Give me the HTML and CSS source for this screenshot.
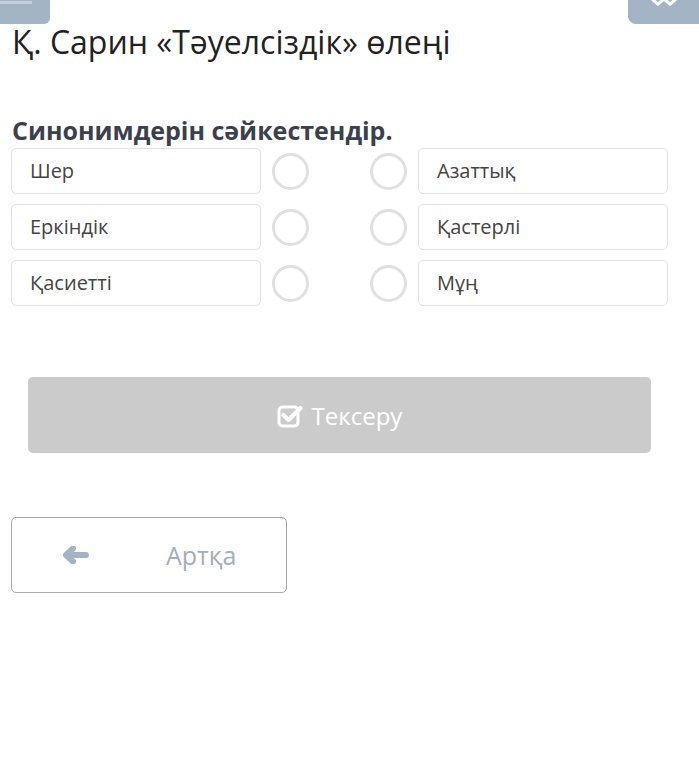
FILE: index.html
```html
<!DOCTYPE html>
<html lang="kk">
<head>
    <meta charset="UTF-8">
    <meta name="viewport" content="width=device-width, initial-scale=1.0">
    <title>Қ. Сарин «Тәуелсіздік» өлеңі</title>
    <link rel="stylesheet" href="styles.css">
</head>
<body>
    <div class="topbar">
        <button class="corner corner-left" aria-label="Мәзір">
            <span class="bar"></span>
        </button>
        <button class="corner corner-right" aria-label="Жабу">
            <svg width="30" height="8" viewBox="0 0 30 8">
                <path d="M4 0 L9 4 L14 0 M16 0 L21 4 L26 0" stroke="#fff" stroke-width="3" fill="none" stroke-linecap="round"/>
            </svg>
        </button>
    </div>

    <div class="page">
        <h1 class="title">Қ. Сарин «Тәуелсіздік» өлеңі</h1>
        <h2 class="task">Синонимдерін сәйкестендір.</h2>

        <div class="match">
            <div class="item">Шер</div>
            <span class="dot"></span>
            <span></span>
            <span class="dot"></span>
            <div class="item">Азаттық</div>

            <div class="item">Еркіндік</div>
            <span class="dot"></span>
            <span></span>
            <span class="dot"></span>
            <div class="item">Қастерлі</div>

            <div class="item">Қасиетті</div>
            <span class="dot"></span>
            <span></span>
            <span class="dot"></span>
            <div class="item">Мұң</div>
        </div>

        <button class="check" disabled>
            <svg width="27" height="25" viewBox="0 0 27 25">
                <rect x="2" y="4" width="19" height="19" rx="3.5" fill="none" stroke="#fff" stroke-width="3"/>
                <path d="M6.5 12 L11.5 17 L23.5 5" fill="none" stroke="#fff" stroke-width="4.2" stroke-linecap="round" stroke-linejoin="round"/>
            </svg>
            Тексеру
        </button>

        <button class="back">
            <svg width="26" height="18" viewBox="0 0 26 18">
                <path d="M10 2.5 L3 9 L10 15.5 M4 9 L23 9" fill="none" stroke="#a3b5c4" stroke-width="6" stroke-linecap="round" stroke-linejoin="round"/>
            </svg>
            <span>Артқа</span>
        </button>
    </div>
</body>
</html>
```

FILE: styles.css
```css
body {
    margin: 0;
    background: #fff;
    font-family: "Open Sans", "Noto Sans", sans-serif;
    color: #333;
}
.topbar {
    display: flex;
    justify-content: space-between;
    height: 24px;
}
.corner {
    height: 24px;
    border: none;
    padding: 0;
    background: #a3b5c4;
}
.corner-left {
    width: 50px;
    border-bottom-right-radius: 6px;
    position: relative;
}
.corner-left .bar {
    position: absolute;
    left: 0;
    top: 1px;
    width: 32px;
    height: 3px;
    background: #c3d0da;
}
.corner-right {
    width: 71px;
    border-bottom-left-radius: 8px;
    display: flex;
    justify-content: center;
    align-items: flex-start;
}
.page {
    padding: 0 31px 0 11px;
}
.title {
    margin: 0;
    padding-left: 1px;
    font-size: 32px;
    line-height: 36px;
    font-weight: 400;
    color: #222;
}
.task {
    margin: 55px 0 3px;
    padding-left: 1px;
    font-size: 25px;
    line-height: 30px;
    font-weight: 700;
    color: #3b404b;
}
.match {
    display: grid;
    grid-template-columns: 250px 37px 1fr 37px 250px;
    column-gap: 11px;
    row-gap: 10px;
    align-items: center;
}
.item {
    height: 44px;
    line-height: 44px;
    border: 1px solid #e2e2e2;
    border-radius: 5px;
    padding-left: 18px;
    font-size: 20px;
    color: #444;
}
.dot {
    width: 31px;
    height: 31px;
    border: 3px solid #e0e0e0;
    border-radius: 50%;
}
.check {
    display: flex;
    justify-content: center;
    align-items: center;
    gap: 8px;
    width: calc(100% - 34px);
    height: 76px;
    margin: 71px 17px 0;
    border: none;
    border-radius: 5px;
    background: #cbcbcb;
    color: #fff;
    font-family: inherit;
    font-size: 24px;
}
.back {
    display: flex;
    align-items: center;
    width: 276px;
    height: 76px;
    margin-top: 64px;
    padding: 0 0 0 51px;
    border: 1px solid #a9a9a9;
    border-radius: 5px;
    background: #fff;
    font-family: inherit;
    font-size: 25px;
    color: #a3aebb;
}
.back span {
    margin-left: 77px;
}
```
